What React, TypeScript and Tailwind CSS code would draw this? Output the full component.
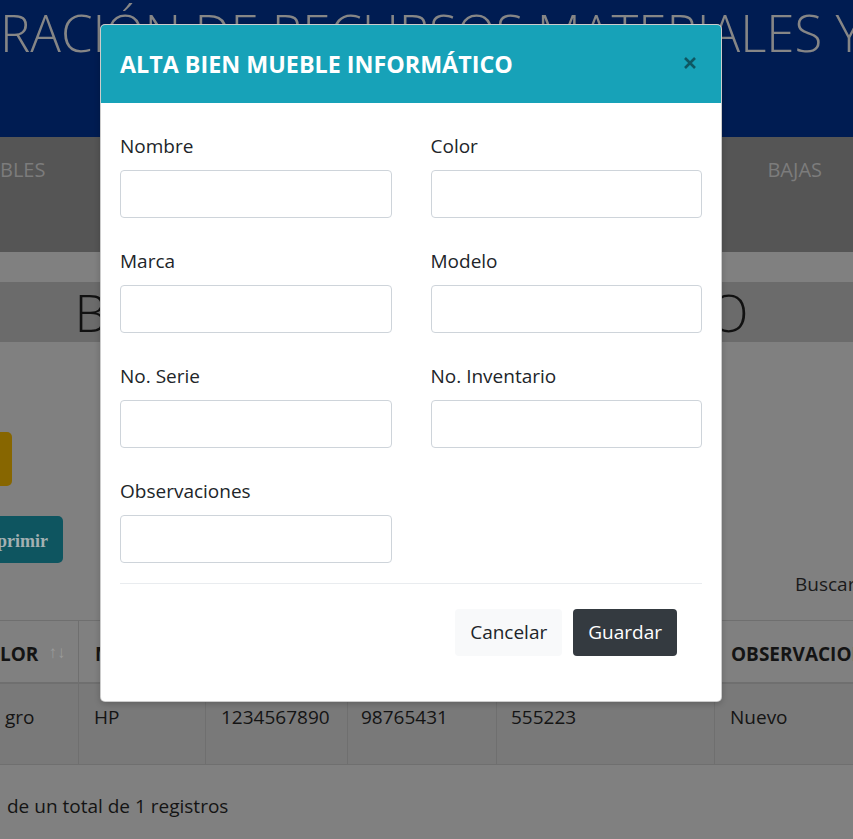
import React from "react";

const F = { fontFamily: '"Open Sans", "Noto Sans", sans-serif' };

function Field({ label }: { label: string }) {
  return (
    <div className="flex flex-col">
      <label className="text-[19px] leading-[27px] text-[#212529] mb-[10px]">{label}</label>
      <div className="h-[48px] w-full rounded-[4px] border border-[#ced4da] bg-white" />
    </div>
  );
}

export default function App() {
  return (
    <div className="relative w-full h-[839px] overflow-hidden bg-[#808080]" style={F}>
      {/* background page */}
      <div className="h-[137px] bg-[#001c52] overflow-hidden">
        <div className="whitespace-nowrap text-[51px] leading-[64px] font-light text-[#868686]">
          RACIÓN DE RECURSOS MATERIALES Y SERVICIOS
        </div>
      </div>
      <div className="h-[115px] bg-[#555555] flex justify-between pt-[19px]">
        <span className="text-[20px] leading-[28px] text-[#7c7c7c]">BLES</span>
        <span className="text-[20px] leading-[28px] text-[#7c7c7c] pr-[31px]">BAJAS</span>
      </div>
      <div className="h-[30px]" />
      <div className="h-[60px] bg-[#6b6b6b] flex items-center justify-center overflow-hidden">
        <span className="whitespace-nowrap text-[52px] leading-[60px] font-light text-[#111111] ml-[-30px]">
          BIEN MUEBLE INFORMÁTICO
        </span>
      </div>
      <div className="h-[90px]" />
      <div className="w-[12px] h-[54px] rounded-r-[5px] bg-[#876600]" />
      <div className="h-[30px]" />
      <div className="w-[63px] h-[47px] rounded-r-[5px] bg-[#0e5560] flex items-center justify-end pr-[15px] pt-[3px]">
        <span
          className="text-[18px] font-bold text-[#a3b0b2]"
          style={{ fontFamily: '"Liberation Serif", serif' }}
        >
          primir
        </span>
      </div>
      <div className="h-[8px]" />
      <div className="pl-[795px] text-[19px] leading-[27px] text-[#1a1a1a] whitespace-nowrap">Buscar:</div>
      <div className="h-[22px]" />
      {/* table */}
      <div className="grid grid-cols-[78px_127px_142px_149px_218px_139px] text-[19px] text-[#141414]">
        <div className="h-[64px] border-t border-b-2 border-[#6f6f6f] flex items-center pt-[5px] font-bold">
          LOR<span className="ml-[10px] text-[17px] font-normal text-[#9a9a9a] -mt-[4px]">↑↓</span>
        </div>
        <div className="h-[64px] border-t border-b-2 border-l border-[#6f6f6f] flex items-center pt-[5px] pl-[16px] font-bold">
          MARCA
        </div>
        <div className="h-[64px] border-t border-b-2 border-l border-[#6f6f6f] flex items-center pt-[5px] pl-[16px] font-bold">
          SERIE
        </div>
        <div className="h-[64px] border-t border-b-2 border-l border-[#6f6f6f] flex items-center pt-[5px] pl-[14px] font-bold">
          INV
        </div>
        <div className="h-[64px] border-t border-b-2 border-l border-[#6f6f6f] flex items-center pt-[5px] pl-[15px] font-bold">
          MODELO
        </div>
        <div className="h-[64px] border-t border-b-2 border-l border-[#6f6f6f] flex items-center pt-[5px] pl-[16px] font-bold whitespace-nowrap overflow-hidden">
          OBSERVACIONES
        </div>
        <div className="h-[81px] bg-[#797979] border-b border-[#6f6f6f] pl-[5px] pt-[20px] leading-[27px]">gro</div>
        <div className="h-[81px] bg-[#797979] border-b border-l border-[#6f6f6f] pl-[15px] pt-[20px] leading-[27px]">HP</div>
        <div className="h-[81px] bg-[#797979] border-b border-l border-[#6f6f6f] pl-[15px] pt-[20px] leading-[27px]">1234567890</div>
        <div className="h-[81px] bg-[#797979] border-b border-l border-[#6f6f6f] pl-[13px] pt-[20px] leading-[27px]">98765431</div>
        <div className="h-[81px] bg-[#797979] border-b border-l border-[#6f6f6f] pl-[14px] pt-[20px] leading-[27px]">555223</div>
        <div className="h-[81px] bg-[#797979] border-b border-l border-[#6f6f6f] pl-[15px] pt-[20px] leading-[27px]">Nuevo</div>
      </div>
      <div className="pl-[7px] pt-[28px] text-[19px] leading-[27px] text-[#141414] whitespace-nowrap">
        de un total de 1 registros
      </div>

      {/* modal */}
      <div className="absolute inset-0">
        <div className="mt-[24px] ml-[100px] w-[622px] bg-white rounded-[5px] overflow-hidden border border-black/20 shadow-[0_2px_6px_rgba(0,0,0,0.2)]">
          <div className="h-[78px] bg-[#17a2b8] flex items-center justify-between pl-[19px] pr-[24px]">
            <h5 className="text-white font-bold text-[23.3px] leading-[30px]">ALTA BIEN MUEBLE INFORMÁTICO</h5>
            <svg width="14" height="14" viewBox="0 0 14 14" className="mt-[-2px]">
              <path d="M2 2 L12 12 M12 2 L2 12" stroke="#0e5762" strokeWidth="2.6" strokeLinecap="butt" />
            </svg>
          </div>
          <div className="pt-[30px] px-[19px]">
            <div className="grid grid-cols-2 gap-x-[39px] gap-y-[30px]">
              <Field label="Nombre" />
              <Field label="Color" />
              <Field label="Marca" />
              <Field label="Modelo" />
              <Field label="No. Serie" />
              <Field label="No. Inventario" />
              <Field label="Observaciones" />
            </div>
            <div className="mt-[20px] border-t border-[#e9ecef]" />
          </div>
          <div className="flex justify-end gap-[11px] pt-[25px] pb-[45px] pr-[44px]">
            <button className="h-[47px] px-[15px] rounded-[4px] bg-[#f8f9fa] text-[#212529] text-[19px]">Cancelar</button>
            <button className="h-[47px] px-[15px] rounded-[4px] bg-[#343a40] text-white text-[19px]">Guardar</button>
          </div>
        </div>
      </div>
    </div>
  );
}
